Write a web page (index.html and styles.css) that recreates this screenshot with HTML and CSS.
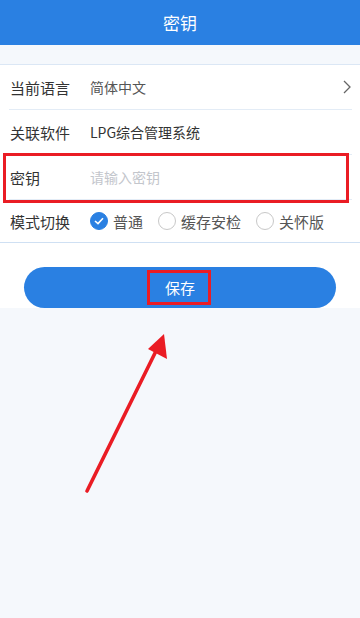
FILE: index.html
```html
<!DOCTYPE html>
<html lang="zh-CN">
<head>
    <meta charset="UTF-8">
    <meta name="viewport" content="width=device-width, initial-scale=1.0">
    <title>密钥</title>
    <link rel="stylesheet" href="styles.css">
</head>
<body>
    <header class="top-bar">密钥</header>

    <div class="gap"></div>

    <ul class="form-list">
        <li class="form-row">
            <span class="form-label">当前语言</span>
            <span class="form-value">简体中文</span>
            <svg class="chevron" width="8" height="14" viewBox="0 0 8 14">
                <path d="M1 1 L7 7 L1 13" fill="none" stroke="#666" stroke-width="1.3"/>
            </svg>
        </li>
        <li class="form-row">
            <span class="form-label">关联软件</span>
            <span class="form-value dark">LPG综合管理系统</span>
        </li>
        <li class="form-row key-row">
            <span class="form-label">密钥</span>
            <input class="form-input" type="text" placeholder="请输入密钥">
            <span class="mark-box"></span>
        </li>
        <li class="form-row">
            <span class="form-label">模式切换</span>
            <div class="radio-group">
                <label class="radio checked">
                    <span class="radio-dot">
                        <svg width="10" height="8" viewBox="0 0 10 8">
                            <path d="M1 4 L4 6.6 L9 1.2" fill="none" stroke="#fff" stroke-width="1.6"/>
                        </svg>
                    </span>普通
                </label>
                <label class="radio"><span class="radio-dot"></span>缓存安检</label>
                <label class="radio"><span class="radio-dot"></span>关怀版</label>
            </div>
        </li>
    </ul>

    <div class="actions">
        <button class="save-btn"><span class="save-text">保存<span class="mark-box"></span></span></button>
    </div>

    <!-- annotation arrow -->
    <svg class="arrow" width="360" height="618" viewBox="0 0 360 618">
        <line x1="87" y1="491" x2="157" y2="349" stroke="#ea1c24" stroke-width="3.6" stroke-linecap="round"/>
        <polygon points="164,334 167,359 148,349" fill="#ea1c24"/>
    </svg>
</body>
</html>
```

FILE: styles.css
```css
body {
    margin: 0;
    background-color: #f5f8fc;
    font-family: "Noto Sans CJK SC", "Noto Sans", sans-serif;
    color: #333;
    position: relative;
    min-height: 618px;
}
.top-bar {
    height: 45px;
    line-height: 45px;
    background-color: #2a80e2;
    color: #fff;
    text-align: center;
    font-size: 17px;
}
.gap {
    height: 19px;
    border-bottom: 1px solid #dbe7f5;
}
.form-list {
    list-style-type: none;
    margin: 0;
    padding: 0 8px 0 9px;
    background-color: #fff;
    border-bottom: 1px solid #cfe0f3;
}
.form-row {
    display: flex;
    align-items: center;
    height: 44px;
    padding-left: 1px;
    border-bottom: 1px solid #e3ecf6;
    position: relative;
}
.form-row:last-child {
    border-bottom: none;
    height: 42px;
}
.form-label {
    width: 80px;
    font-size: 15px;
    color: #333;
}
.form-value {
    flex-grow: 1;
    font-size: 14px;
    color: #555;
}
.form-value.dark {
    color: #333;
}
.chevron {
    margin-right: 1px;
}
.form-input {
    flex-grow: 1;
    border: none;
    outline: none;
    padding: 0;
    font-family: inherit;
    font-size: 14px;
    color: #333;
    background: transparent;
}
.form-input::placeholder {
    color: #c3c6cc;
}
.mark-box {
    position: absolute;
    border: 3px solid #ea1c24;
    pointer-events: none;
}
.key-row .mark-box {
    left: -6px;
    right: 3px;
    top: -2px;
    bottom: -4px;
}
.radio-group {
    display: flex;
    align-items: center;
}
.radio {
    display: flex;
    align-items: center;
    font-size: 15px;
    color: #555;
    margin-right: 15px;
}
.radio-dot {
    box-sizing: border-box;
    width: 18px;
    height: 18px;
    border: 1px solid #c8c8c8;
    border-radius: 50%;
    margin-right: 5px;
    display: flex;
    align-items: center;
    justify-content: center;
}
.radio.checked .radio-dot {
    background-color: #2a80e2;
    border-color: #2a80e2;
}
.actions {
    background-color: #fff;
    padding: 24px 24px 0;
}
.save-btn {
    display: block;
    width: 100%;
    height: 41px;
    border: none;
    border-radius: 21px;
    background-color: #2a80e2;
    color: #fff;
    font-family: inherit;
    font-size: 15px;
    cursor: pointer;
}
.save-text {
    position: relative;
}
.save-text .mark-box {
    left: -18px;
    right: -16px;
    top: -7px;
    bottom: -7px;
}
.arrow {
    position: absolute;
    left: 0;
    top: 0;
    pointer-events: none;
}
```
